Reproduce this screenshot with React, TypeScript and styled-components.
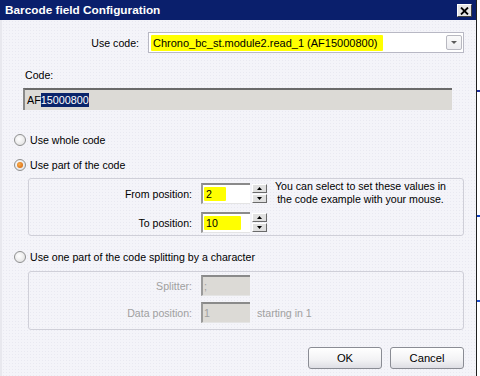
import React from "react";
import styled, { createGlobalStyle } from "styled-components";

const GlobalStyle = createGlobalStyle`
  html, body {
    margin: 0;
    padding: 0;
    background: #ffffff;
  }
  body {
    font-family: "Liberation Sans", Arial, sans-serif;
    font-size: 10.6px;
    color: #000;
  }
`;

const Page = styled.div`
  display: flex;
  width: 480px;
  height: 376px;
  overflow: hidden;
`;

const Window = styled.div`
  width: 477px;
  height: 376px;
  display: flex;
  flex-direction: column;
  background: #f4f4f9;
  border-right: 1px solid #202020;
  box-sizing: border-box;
`;

const Backdrop = styled.div`
  flex: 1;
  background: linear-gradient(
    #fff 0 90px,
    #2030a0 90px 92px,
    #fff 92px 215px,
    #1040c0 215px 217px,
    #fff 217px 300px,
    #2050d0 300px 302px,
    #fff 302px
  );
`;

const TitleBar = styled.div`
  height: 20px;
  display: flex;
  align-items: center;
  justify-content: space-between;
  background: #0a1f6c;
  padding: 0 4px 0 5px;
`;

const Title = styled.span`
  color: #fff;
  font-weight: bold;
  font-size: 11.8px;
`;

const CloseButton = styled.div`
  width: 15px;
  height: 13px;
  margin-top: 1px;
  box-sizing: border-box;
  background: #e6e6e6;
  border: 1px solid;
  border-color: #fff #404040 #404040 #fff;
  display: flex;
  align-items: center;
  justify-content: center;
`;

const Body = styled.div`
  flex: 1;
  display: flex;
  flex-direction: column;
  padding: 0 12px 0 12px;
  border-left: 2px solid #e8e8ee;
  background-image: radial-gradient(#e9e9f1 0.6px, transparent 0.7px);
  background-size: 3px 3px;
`;

const UseCodeRow = styled.div`
  display: flex;
  align-items: center;
  margin-top: 12px;
  height: 21px;
`;

const RowLabel = styled.span`
  width: 134px;
  text-align: right;
  padding-right: 9px;
  box-sizing: border-box;
`;

const Combo = styled.div`
  width: 316px;
  height: 21px;
  box-sizing: border-box;
  border: 1px solid #b8b8c4;
  background: #fff;
  display: flex;
  align-items: center;
  justify-content: space-between;
  padding: 0 1px 0 2px;
`;

const Highlight = styled.span<{ $w?: number }>`
  display: inline-block;
  background: #ffff00;
  padding: 1px 2px;
  min-width: ${(p) => p.$w ?? 0}px;
  border-radius: 1px;
`;

const ComboText = styled(Highlight)`
  font-size: 11px;
  line-height: 14px;
  padding-right: 6px;
`;

const DropButton = styled.div`
  width: 16px;
  height: 15px;
  box-sizing: border-box;
  border: 1px solid #b8b8c0;
  border-radius: 2px;
  background: linear-gradient(#fafafa, #ececf0);
  display: flex;
  align-items: center;
  justify-content: center;
`;

const FieldLabel = styled.div`
  margin: 16px 0 0 11px;
  line-height: 12px;
`;

const CodeBox = styled.div`
  margin: 7px 0 0 9px;
  width: 429px;
  height: 22px;
  box-sizing: border-box;
  background: #dcdad6;
  border-top: 2px solid #6a6a6a;
  border-left: 2px solid #8a8a8a;
  display: flex;
  align-items: center;
  padding-left: 2px;
  font-size: 10.8px;
`;

const Selected = styled.span`
  background: #0a246a;
  color: #fff;
  padding: 1px 0;
`;

const RadioRow = styled.label<{ $top: number }>`
  display: flex;
  align-items: center;
  gap: 4px;
  margin-top: ${(p) => p.$top}px;
  height: 14px;
`;

const RadioCircle = styled.span<{ $on?: boolean }>`
  width: 12px;
  height: 12px;
  box-sizing: border-box;
  border-radius: 50%;
  border: 1px solid #8e8f8f;
  background: radial-gradient(circle at 40% 40%, #ffffff, #dcdcdc);
  display: flex;
  align-items: center;
  justify-content: center;
  &::after {
    content: "";
    display: ${(p) => (p.$on ? "block" : "none")};
    width: 6px;
    height: 6px;
    border-radius: 50%;
    background: radial-gradient(circle at 40% 40%, #f8b050, #d25a00);
  }
`;

const Group = styled.div<{ $top: number; $pad: number }>`
  margin: ${(p) => p.$top}px 0 0 14px;
  width: 436px;
  box-sizing: border-box;
  border: 1px solid #cfcfd8;
  border-radius: 3px;
  padding: ${(p) => p.$pad}px 0 0 0;
  display: grid;
  grid-template-columns: 172px 49px 18px auto;
`;

const GroupLabel = styled.span<{ $disabled?: boolean }>`
  grid-column: 1;
  text-align: right;
  padding-right: 9px;
  align-self: center;
  color: ${(p) => (p.$disabled ? "#a0a0a0" : "#000")};
`;

const NumberBox = styled.div<{ $disabled?: boolean }>`
  grid-column: 2;
  height: 21px;
  box-sizing: border-box;
  background: ${(p) => (p.$disabled ? "#dcdad6" : "#fff")};
  border-top: 2px solid #8a8a8a;
  border-left: 2px solid #9a9a9a;
  border-bottom: 1px solid #e4e4e4;
  display: flex;
  align-items: center;
  padding-left: 1px;
  color: ${(p) => (p.$disabled ? "#a0a0a0" : "#000")};
`;

const Spin = styled.div`
  grid-column: 3;
  margin-left: 2px;
  display: flex;
  flex-direction: column;
  justify-content: center;
  gap: 1px;
`;

const SpinBtn = styled.div`
  width: 15px;
  height: 9px;
  box-sizing: border-box;
  background: #e0e0e0;
  border: 1px solid;
  border-color: #fff #6a6a6a #6a6a6a #fff;
  display: flex;
  align-items: center;
  justify-content: center;
`;

const Hint = styled.div`
  grid-column: 4;
  grid-row: 1 / span 2;
  padding-left: 7px;
  line-height: 13px;
  text-align: center;
  margin-top: -3px;
  justify-self: start;
`;

const After = styled.span`
  grid-column: 3 / span 2;
  padding-left: 7px;
  align-self: center;
  color: #a0a0a0;
`;

const RowGap = styled.div<{ $h: number }>`
  grid-column: 1 / span 4;
  height: ${(p) => p.$h}px;
`;

const Footer = styled.div`
  display: flex;
  justify-content: flex-end;
  gap: 8px;
  margin-top: 17px;
`;

const Button = styled.div`
  width: 74px;
  height: 22px;
  box-sizing: border-box;
  border: 1px solid #8a8c94;
  border-radius: 3px;
  background: linear-gradient(#ffffff, #f2f2f4 60%, #dedee4);
  display: flex;
  align-items: center;
  justify-content: center;
  font-size: 11.2px;
`;

const Arrow = ({ up }: { up?: boolean }) => (
  <svg width="5" height="3" viewBox="0 0 5 3">
    <path d={up ? "M2.5 0 L5 3 L0 3 Z" : "M0 0 L5 0 L2.5 3 Z"} fill="#000" />
  </svg>
);

const SpinPair = () => (
  <Spin>
    <SpinBtn>
      <Arrow up />
    </SpinBtn>
    <SpinBtn>
      <Arrow />
    </SpinBtn>
  </Spin>
);

export default function App() {
  return (
    <Page>
      <GlobalStyle />
      <Window>
        <TitleBar>
          <Title>Barcode field Configuration</Title>
          <CloseButton>
            <svg width="9" height="8" viewBox="0 0 9 8">
              <path d="M1 0.5 L8 7.5 M8 0.5 L1 7.5" stroke="#000" strokeWidth="1.8" />
            </svg>
          </CloseButton>
        </TitleBar>
        <Body>
          <UseCodeRow>
            <RowLabel>Use code:</RowLabel>
            <Combo>
              <ComboText>Chrono_bc_st.module2.read_1 (AF15000800)</ComboText>
              <DropButton>
                <svg width="6" height="3" viewBox="0 0 6 3">
                  <path d="M0 0 L6 0 L3 3 Z" fill="#5a5a5a" />
                </svg>
              </DropButton>
            </Combo>
          </UseCodeRow>

          <FieldLabel>Code:</FieldLabel>
          <CodeBox>
            AF<Selected>15000800</Selected>
          </CodeBox>

          <RadioRow $top={23}>
            <RadioCircle />
            Use whole code
          </RadioRow>
          <RadioRow $top={11}>
            <RadioCircle $on />
            Use part of the code
          </RadioRow>

          <Group $top={6} $pad={4}>
            <GroupLabel>From position:</GroupLabel>
            <NumberBox>
              <Highlight $w={18}>2</Highlight>
            </NumberBox>
            <SpinPair />
            <Hint>
              You can select to set these values in
              <br />
              the code example with your mouse.
            </Hint>
            <RowGap $h={6} />
            <GroupLabel>To position:</GroupLabel>
            <NumberBox>
              <Highlight $w={33}>10</Highlight>
            </NumberBox>
            <SpinPair />
            <RowGap $h={2} />
          </Group>

          <RadioRow $top={14}>
            <RadioCircle />
            Use one part of the code splitting by a character
          </RadioRow>

          <Group $top={7} $pad={3}>
            <GroupLabel $disabled>Splitter:</GroupLabel>
            <NumberBox $disabled>;</NumberBox>
            <RowGap $h={6} />
            <GroupLabel $disabled>Data position:</GroupLabel>
            <NumberBox $disabled>1</NumberBox>
            <After>starting in 1</After>
            <RowGap $h={6} />
          </Group>

          <Footer>
            <Button>OK</Button>
            <Button>Cancel</Button>
          </Footer>
        </Body>
      </Window>
      <Backdrop />
    </Page>
  );
}
